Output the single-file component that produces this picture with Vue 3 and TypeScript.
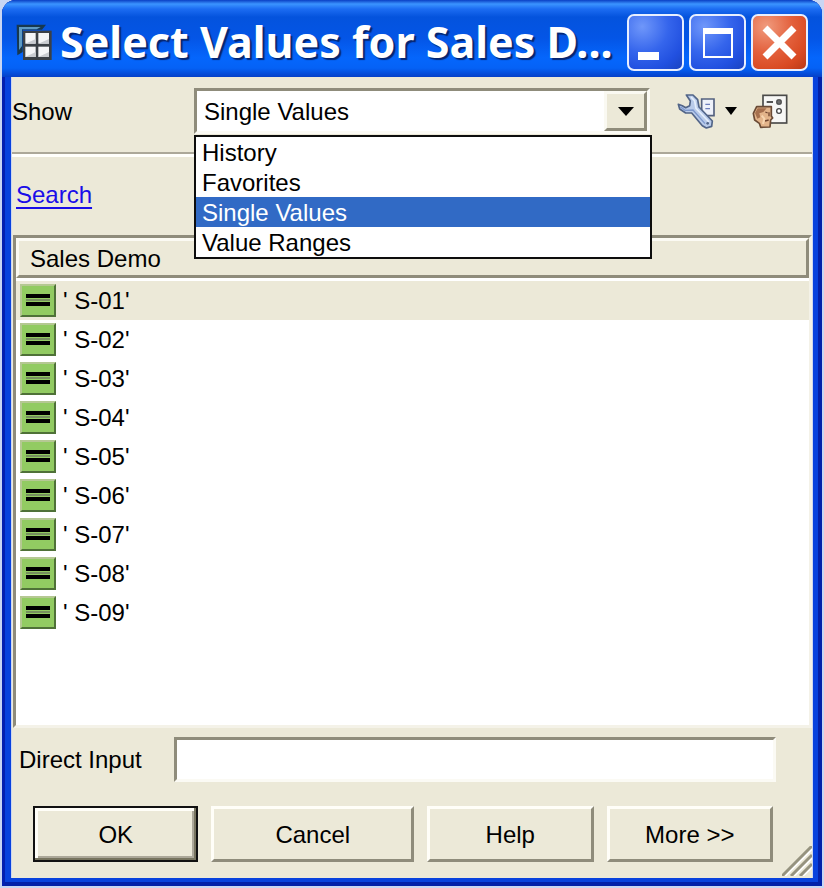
<script setup lang="ts">
import { ref } from 'vue'

const modes = ['History', 'Favorites', 'Single Values', 'Value Ranges']
const mode = ref('Single Values')
const menuOpen = ref(true)
const directInput = ref('')
const selectedRow = ref(0)
const members = Array.from({ length: 9 }, (_, i) => `' S-0${i + 1}'`)

function choose(name: string) {
  mode.value = name
  menuOpen.value = false
}
</script>

<template>
  <main class="window">
    <header class="titlebar">
      <svg class="app-icon" viewBox="0 0 108 108" aria-hidden="true">
        <path d="M2 2H90L78 17H20V84L4 94Z" fill="#17384f" />
        <path d="M9 9H74L62 16H18V66L9 78Z" fill="#5d9ac4" />
        <rect x="21" y="20" width="86" height="88" fill="#3b4046" />
        <g fill="#f4f5f7">
          <rect x="28" y="27" width="31" height="32" />
          <rect x="67" y="27" width="32" height="32" />
          <rect x="28" y="68" width="31" height="31" />
          <rect x="67" y="68" width="32" height="31" />
        </g>
        <g fill="#c9ccd1">
          <path d="M28 59L59 45V59ZM67 59L99 45V59ZM28 99L59 84V99ZM67 99L99 84V99Z" />
        </g>
      </svg>
      <h1 class="title">Select Values for Sales D...</h1>
      <div class="captions">
        <button type="button" class="caption" aria-label="Minimize">
          <svg viewBox="0 0 53 53"><rect x="9" y="36" width="21" height="8" fill="#fff" /></svg>
        </button>
        <button type="button" class="caption" aria-label="Maximize">
          <svg viewBox="0 0 53 53"><path d="M12 12H42V42H12ZM14 18V40H40V18Z" fill="#fff" fill-rule="evenodd" /></svg>
        </button>
        <button type="button" class="caption close" aria-label="Close">
          <svg viewBox="0 0 53 53"><path d="M12 12L41 41M41 12L12 41" stroke="#fff" stroke-width="7" /></svg>
        </button>
      </div>
    </header>

    <div class="client">
      <section class="toolbar">
        <label for="show">Show</label>
        <div class="combo">
          <select id="show" v-model="mode" class="combo-select" @mousedown.prevent="menuOpen = !menuOpen">
            <option v-for="m in modes" :key="m">{{ m }}</option>
          </select>
          <span class="combo-arrow" aria-hidden="true">
            <svg viewBox="0 0 16 9"><path d="M0 0H16L8 9Z" /></svg>
          </span>
          <ul v-if="menuOpen" class="menu" role="listbox" aria-label="Show">
            <li
              v-for="m in modes"
              :key="m"
              role="option"
              :aria-selected="m === mode"
              :class="{ active: m === mode }"
              @click="choose(m)"
            >{{ m }}</li>
          </ul>
        </div>
        <div class="tools">
          <button type="button" class="tool" aria-label="Settings">
            <svg class="wrench" viewBox="350 284 117 108">
              <path d="M424 302H461V352H424Z" fill="#eef1fa" stroke="#54617f" stroke-width="5" />
              <path d="M435 318H449M435 331H449" stroke="#6d7ebc" stroke-width="4" />
              <path
                d="M378 290L398 290L412 304L416 326L456 368L454 384L438 389L426 382L394 344L376 344L358 332L354 318L366 322L376 328L388 322L390 308Z"
                fill="#b9cbea" stroke="#526588" stroke-width="5" stroke-linejoin="round"
              />
              <path d="M392 296L403 308L407 330L446 371" fill="none" stroke="#e5eefb" stroke-width="5" />
              <path d="M360 325L374 336L398 335L434 376" fill="none" stroke="#7d98cc" stroke-width="4" />
              <circle cx="442" cy="375" r="4" fill="#526588" />
            </svg>
            <svg class="tool-arrow" viewBox="0 0 12 8"><path d="M0 0H12L6 8Z" /></svg>
          </button>
          <button type="button" class="tool" aria-label="Personalize">
            <svg class="person" viewBox="578 280 108 105">
              <rect x="611" y="284" width="71" height="83" fill="#f7f7f5" stroke="#4b4b49" stroke-width="5" />
              <path d="M622 304H641" stroke="#333" stroke-width="5" />
              <circle cx="659" cy="304" r="9" fill="#4e4e4e" />
              <path d="M651 304H667M659 296V312" stroke="#888" stroke-width="2" />
              <circle cx="659" cy="331" r="7" fill="#fff" stroke="#444" stroke-width="4" />
              <path
                d="M592 318L636 318V346L640 352L634 358L632 379L604 380L600 368L586 358L582 338Z"
                fill="#e3b48a" stroke="#6a4a35" stroke-width="5" stroke-linejoin="round"
              />
              <path d="M587 337L595 323H622L612 334L600 338L603 350L594 354Z" fill="#a56f4d" />
              <path d="M618 334L625 337M629 335V347M617 361L628 358" stroke="#70452f" stroke-width="4" fill="none" />
              <path d="M607 345L615 354L611 370" stroke="#f7d5af" stroke-width="6" fill="none" />
            </svg>
          </button>
        </div>
      </section>

      <section class="search">
        <a href="#search">Search</a>
      </section>

      <section class="list">
        <table>
          <thead>
            <tr><th scope="col">Sales Demo</th></tr>
          </thead>
          <tbody>
            <tr
              v-for="(m, i) in members"
              :key="m"
              :class="{ current: i === selectedRow }"
              @click="selectedRow = i"
            >
              <td>
                <div class="member">
                  <svg class="equals" viewBox="0 0 36 33" aria-hidden="true">
                    <rect width="36" height="33" fill="#4f7138" />
                    <path d="M0 0H36L34 2V31H2L0 33Z" fill="#b5c893" />
                    <rect x="2" y="2" width="32" height="29" fill="#92cb62" />
                    <path d="M6 10H30V14H6ZM6 18H30V22H6Z" />
                    <path d="M6 15H30V17H6Z" fill="#76905f" />
                  </svg>
                  <span>{{ m }}</span>
                </div>
              </td>
            </tr>
          </tbody>
        </table>
      </section>

      <section class="direct">
        <label for="direct">Direct Input</label>
        <input id="direct" v-model="directInput" type="text" />
      </section>

      <footer class="actions">
        <button type="button" class="push default">OK</button>
        <button type="button" class="push">Cancel</button>
        <button type="button" class="push">Help</button>
        <button type="button" class="push">More &gt;&gt;</button>
      </footer>
      <svg class="grip" viewBox="0 0 30 30" aria-hidden="true">
        <g stroke="#fff" stroke-width="2"><path d="M3 30L30 3M12 30L30 12M21 30L30 21" /></g>
        <g stroke="#96937f" stroke-width="3"><path d="M0 30L30 0M9 30L30 9M18 30L30 18" /></g>
      </svg>
    </div>
  </main>
</template>

<style>
body {
  background: #c9d6f3;
}
</style>

<style scoped>
* {
  box-sizing: border-box;
}

.window {
  display: flex;
  flex-direction: column;
  min-height: calc(100vh - 2px);
  margin: 0 2px;
  padding: 0 9px 8px;
  border-radius: 14px 14px 0 0;
  background: #0842dd;
  box-shadow: inset 3px 0 #0420b0, inset -4px 0 #0320a8, inset 0 -4px #0320a8;
  color: #000;
  font-family: "Liberation Sans", Arial, sans-serif;
  font-size: 24px;
  line-height: 30px;
}

button,
input,
select {
  font: inherit;
  color: inherit;
}

.titlebar {
  display: flex;
  align-items: center;
  height: 77px;
  margin: 0 -9px;
  padding: 7px 14px 0;
  border-radius: 14px 14px 0 0;
  background: linear-gradient(#0a3fc4 0, #3b94ff 4px, #1c6cf2 9px, #0453dd 17px, #0455e6 38px, #0566fc 58px, #0562f6 68px, #0540c8 77px);
}

.app-icon {
  flex: none;
  width: 36px;
  height: 36px;
}

.title {
  flex: 1;
  min-width: 0;
  margin: 0 0 0 8px;
  overflow: hidden;
  white-space: nowrap;
  color: #fff;
  font-family: "Noto Sans", "Open Sans", sans-serif;
  font-size: 43px;
  font-weight: 700;
  line-height: 58px;
  text-shadow: 2px 2px 1px #06256f;
}

.captions {
  display: flex;
  gap: 5px;
}

.caption {
  width: 57px;
  height: 57px;
  padding: 0;
  overflow: hidden;
  border: 2px solid #e8efff;
  border-radius: 7px;
  background: radial-gradient(circle at 25% 20%, #6f97fa 0, #3565ec 45%, #2150e0 75%, #1a43c0 100%);
}

.caption svg {
  display: block;
  width: 53px;
  height: 53px;
}

.caption.close {
  background: radial-gradient(circle at 25% 20%, #f09b7e 0, #e3603c 45%, #d94a23 75%, #b93a18 100%);
}

.client {
  position: relative;
  display: flex;
  flex: 1;
  flex-direction: column;
  border-left: 1px solid #cdd6ef;
  border-right: 1px solid #cdd6ef;
  background: #ece9d8;
}

.toolbar {
  display: flex;
  align-items: flex-start;
  height: 77px;
  padding-top: 11px;
  border-bottom: 2px solid #aca899;
}

.toolbar label {
  width: 182px;
  line-height: 48px;
}

.combo {
  position: relative;
  flex: 1;
  max-width: 456px;
  height: 46px;
}

.combo-select {
  width: 100%;
  height: 46px;
  padding: 2px 48px 0 7px;
  border: 3px solid;
  border-color: #8f8c7b #fbfaf4 #fbfaf4 #8f8c7b;
  border-radius: 0;
  outline: none;
  appearance: none;
  background: #fff;
}

.combo-arrow {
  position: absolute;
  top: 3px;
  right: 3px;
  bottom: 3px;
  display: flex;
  align-items: center;
  justify-content: center;
  width: 43px;
  border: 3px solid;
  border-color: #faf9f2 #8f8c7b #8f8c7b #faf9f2;
  background: #ece9d8;
  pointer-events: none;
}

.combo-arrow svg {
  width: 16px;
  height: 9px;
}

.menu {
  position: absolute;
  z-index: 2;
  top: 47px;
  right: -2px;
  left: 0;
  margin: 0;
  padding: 0;
  border: 2px solid #0d0d0d;
  background: #fff;
  list-style: none;
}

.menu li {
  height: 30px;
  padding-left: 6px;
  line-height: 32px;
}

.menu .active {
  background: #316ac5;
  color: #fff;
}

.tools {
  display: flex;
  align-items: center;
  gap: 15px;
  height: 46px;
  padding: 0 24px 0 27px;
}

.tool {
  display: flex;
  align-items: center;
  gap: 9px;
  padding: 0;
  border: 0;
  background: none;
}

.wrench {
  width: 39px;
  height: 36px;
}

.tool-arrow {
  width: 12px;
  height: 8px;
}

.person {
  width: 36px;
  height: 35px;
}

.search {
  height: 81px;
  padding: 23px 4px 0;
  border-top: 3px solid #fffffb;
}

.search a {
  color: #1a0de8;
  text-decoration-thickness: 2px;
  text-underline-offset: 4px;
}

.list {
  flex: 1;
  margin-left: 1px;
  padding-bottom: 4px;
  border: 3px solid;
  border-color: #8f8c7b #f4f2e8 #f4f2e8 #8f8c7b;
  background: #fff;
}

table {
  width: 100%;
  border-collapse: separate;
  border-spacing: 0;
}

th {
  height: 40px;
  padding: 2px 11px 0;
  border: 3px solid;
  border-color: #fbfaf3 #8f8c7b #8f8c7b #fbfaf3;
  background: #ece9d8;
  font-weight: 400;
  line-height: 32px;
  text-align: left;
}

tbody::before {
  content: "";
  display: block;
  height: 3px;
}

td {
  height: 39px;
  padding: 0 4px;
}

.current td {
  background: #ece9d8;
}

.member {
  display: flex;
  align-items: center;
  gap: 7px;
}

.equals {
  flex: none;
  width: 36px;
  height: 33px;
}

.direct {
  display: flex;
  align-items: center;
  padding: 9px 36px 0 7px;
}

.direct label {
  width: 155px;
}

.direct input {
  flex: 1;
  min-width: 0;
  height: 45px;
  padding: 0 6px;
  border: 3px solid;
  border-color: #8f8c7b #fbfaf4 #fbfaf4 #8f8c7b;
  border-radius: 0;
  outline: none;
  background: #fff;
}

.actions {
  display: grid;
  grid-template-columns: 165fr 202fr 166fr 166fr;
  gap: 13px;
  padding: 24px 39px 16px 21px;
}

.push {
  height: 56px;
  padding: 2px 0 0;
  border: 3px solid;
  border-color: #fffef8 #8f8c7b #8f8c7b #fffef8;
  border-radius: 0;
  background: #ece9d8;
}

.push.default {
  border: 2px solid #111;
  box-shadow: inset -2px -2px #77745f, inset 3px 3px #fffef8, inset -4px -4px #aca899;
}

.grip {
  position: absolute;
  right: 0;
  bottom: 2px;
  width: 30px;
  height: 30px;
}
</style>
